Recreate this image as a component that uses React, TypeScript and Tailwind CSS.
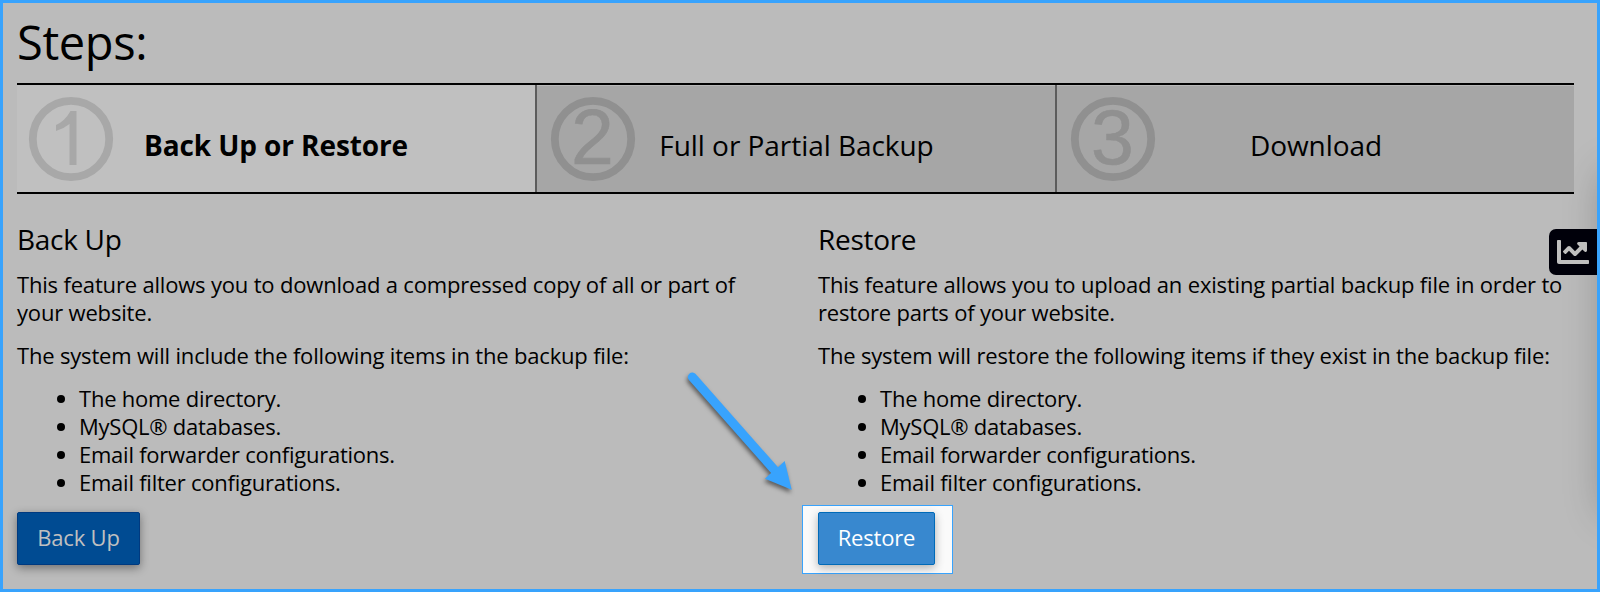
import type { ReactNode } from "react";
import { FaChartLine } from "react-icons/fa";

type Step = { number: string; label: string; active?: boolean };

const steps: Step[] = [
  { number: "1", label: "Back Up or Restore", active: true },
  { number: "2", label: "Full or Partial Backup" },
  { number: "3", label: "Download" },
];

const items = [
  "The home directory.",
  "MySQL® databases.",
  "Email forwarder configurations.",
  "Email filter configurations.",
];

function StepNumber({ value, active }: { value: string; active?: boolean }) {
  return (
    <svg
      viewBox="0 0 84 84"
      className={`absolute top-3 size-21 overflow-visible ${
        active ? "left-3 text-[#a8a8a8]" : "left-[14px] text-[#909090]"
      }`}
    >
      <circle cx="42" cy="42" r="38.2" fill="none" stroke="currentColor" strokeWidth="7.8" />
      {active ? (
        <path d="M41.5 14 H47.5 V68 H40.5 V27 Q35 31.500 27 34 V28 Q36 24 41.500 14 Z" fill="currentColor" />
      ) : (
        <text
          x="41.500"
          y="67"
          textAnchor="middle"
          fill="currentColor"
          fontFamily="'Liberation Sans', Arial, sans-serif"
          fontSize="77"
          fontWeight="400"
          stroke="currentColor"
          strokeWidth="0.6"
        >
          {value}
        </text>
      )}
    </svg>
  );
}

function StepBar() {
  return (
    <ol className="grid h-[111px] grid-cols-[518px_520px_519px] border-y-2 border-black">
      {steps.map((step, i) => (
        <li
          key={step.number}
          className={`relative flex items-center justify-center pt-[13px] text-[28px] leading-9 ${
            step.active
              ? "bg-[#c0c0c0] font-bold tracking-[-0.1px]"
              : "bg-[#a6a6a6] pl-px tracking-[-0.05px] shadow-[inset_0_1px_0_#b8b8b8]"
          } ${i > 0 ? "border-l-2 border-l-[#5c5c5c]" : ""}`}
        >
          <StepNumber value={step.number} active={step.active} />
          {step.label}
        </li>
      ))}
    </ol>
  );
}

function Panel({
  title,
  intro,
  lead,
  children,
}: {
  title: string;
  intro: ReactNode;
  lead: string;
  children: ReactNode;
}) {
  return (
    <section className="flex flex-col items-start text-[22px] leading-[27.8px] tracking-[-0.18px]">
      <h2 className="mb-[14px] text-[28px] leading-[36px] tracking-[-0.3px]">{title}</h2>
      <p className="mb-[15px] whitespace-nowrap">{intro}</p>
      <p className="mb-[16px] whitespace-nowrap">{lead}</p>
      <ul className="mb-[15px] pl-[40px] tracking-[-0.24px]">
        {items.map((item) => (
          <li key={item} className="flex items-center">
            <span className="mr-[14px] size-2 rounded-full bg-black" />
            {item}
          </li>
        ))}
      </ul>
      {children}
    </section>
  );
}

function Arrow() {
  return (
    <svg
      viewBox="0 0 120 130"
      className="absolute left-[677px] top-[367px] h-[130px] w-[120px] drop-shadow-[-1px_3px_2px_rgba(0,0,0,0.5)]"
      fill="#38a3fd"
    >
      <path d="M12.3 7 L98 104" stroke="#38a3fd" strokeWidth="9" strokeLinecap="round" />
      <path d="M111.7 119.7 L104.7 91 L98 97.3 L91.3 102.7 L85 108.7 Z" />
    </svg>
  );
}

export default function App() {
  return (
    <div className="relative h-[592px] w-[1600px] overflow-hidden border-[3px] border-[#38a3fd] bg-[#bbbbbb] pl-[14px] font-['Open_Sans',sans-serif] text-black">
      <div className="absolute left-full top-[170px] ml-2 h-[340px] w-10 shadow-[0_0_40px_rgba(0,0,0,0.28)]" />
      <main className="w-[1557px]">
        <h1 className="mb-[9px] pt-[8px] text-[47px] leading-[63px] tracking-[-0.35px]">Steps:</h1>
        <StepBar />
        <div className="mt-[27px] grid grid-cols-[801px_1fr]">
          <Panel
            title="Back Up"
            intro={
              <>
                This feature allows you to download a compressed copy of all or part of
                <br />
                your website.
              </>
            }
            lead="The system will include the following items in the backup file:"
          >
            <button className="h-[53px] w-[123px] rounded-[2px] border border-[#003a80] bg-[#004b92] text-[#c0c0c0] shadow-[0_3px_10px_rgba(0,0,0,0.4)]">
              Back Up
            </button>
          </Panel>
          <Panel
            title="Restore"
            intro={
              <>
                This feature allows you to upload an existing partial backup file in order to
                <br />
                restore parts of your website.
              </>
            }
            lead="The system will restore the following items if they exist in the backup file:"
          >
            <div className="-ml-4 -mt-[7px] h-[69px] w-[151px] border border-[#38a3fd] bg-[#fafafa] pl-[15px] pt-[6px]">
              <button className="h-[53px] w-[117px] rounded-[2px] border border-[#006ab8] bg-[#3888cf] text-white shadow-[0_3px_10px_rgba(0,0,0,0.3)]">
                Restore
              </button>
            </div>
          </Panel>
        </div>
      </main>
      <Arrow />
      <div className="absolute right-0 top-[226px] flex h-[46px] w-[48px] items-center rounded-l-[7px] bg-[#00000a] pl-2 text-[#bfbfbf]">
        <FaChartLine className="size-8" />
      </div>
    </div>
  );
}
